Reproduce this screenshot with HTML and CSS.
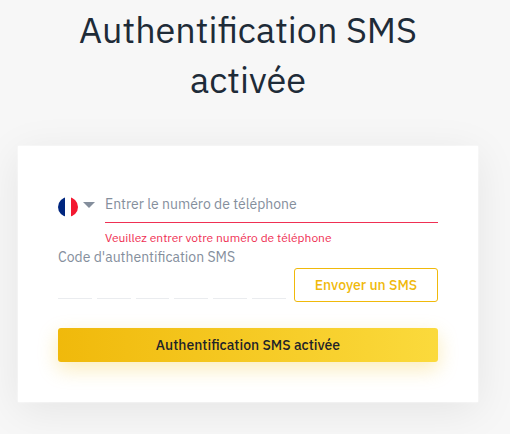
FILE: index.html
```html
<!DOCTYPE html>
<html lang="fr">
<head>
  <meta charset="UTF-8">
  <meta name="viewport" content="width=device-width, initial-scale=1.0">
  <title>Authentification SMS</title>
  <link rel="stylesheet" href="styles.css">
</head>
<body>
  <h1 class="title">Authentification SMS activée</h1>

  <form class="card">
    <!-- Phone -->
    <div class="phone-row">
      <div class="country">
        <svg class="flag" viewBox="0 0 20 20">
          <clipPath id="round"><circle cx="10" cy="10" r="10"/></clipPath>
          <g clip-path="url(#round)">
            <rect width="20" height="20" fill="#fff"/>
            <rect width="7" height="20" fill="#00267f"/>
            <rect x="13" width="7" height="20" fill="#f31830"/>
          </g>
        </svg>
        <svg class="arrow" viewBox="0 0 12 6"><path d="M0 0h12L6 6z" fill="#848e9c"/></svg>
      </div>
      <div class="phone-field">
        <input class="phone-input" type="tel" placeholder="Entrer le numéro de téléphone">
        <p class="error">Veuillez entrer votre numéro de téléphone</p>
      </div>
    </div>

    <!-- Code -->
    <label class="code-label">Code d'authentification SMS</label>
    <div class="code-row">
      <div class="digits">
        <span></span><span></span><span></span><span></span><span></span><span></span>
      </div>
      <button type="button" class="send-btn">Envoyer un SMS</button>
    </div>

    <button type="button" class="submit-btn">Authentification SMS activée</button>
  </form>
</body>
</html>
```

FILE: styles.css
```css
* {
  box-sizing: border-box;
}

body {
  margin: 0;
  padding: 5px 32px 0 18px;
  height: 434px;
  overflow: hidden;
  background-color: #f7f7f7;
  font-family: "IBM Plex Sans", Roboto, sans-serif;
  color: #1e2329;
}

.title {
  margin: 0 0 41px;
  padding: 0 40px;
  font-size: 36px;
  line-height: 50px;
  font-weight: 400;
  text-align: center;
  color: #1e2b38;
}

.card {
  width: 460px;
  height: 256px;
  padding: 40px;
  background-color: #fff;
  box-shadow: 0 0 2px #fff, 0 8px 40px rgba(0, 0, 0, 0.08);
}

/* Phone */
.phone-row {
  display: flex;
  height: 62px;
}

.country {
  display: flex;
  gap: 5px;
  width: 47px;
  padding-top: 11px;
}

.flag {
  width: 20px;
  height: 20px;
}

.arrow {
  width: 12px;
  height: 6px;
  margin-top: 5px;
}

.phone-field {
  flex: 1;
}

.phone-input {
  display: block;
  width: 100%;
  height: 37px;
  padding: 0;
  border: none;
  border-bottom: 1px solid #ef3054;
  outline: none;
  background: none;
  font-family: inherit;
  font-size: 14px;
}

.phone-input::placeholder {
  color: #848e9c;
}

.error {
  margin: 7px 0 0;
  font-size: 12px;
  line-height: 16px;
  color: #ef3054;
}

/* Code */
.code-label {
  display: block;
  height: 20px;
  font-size: 14px;
  line-height: 18px;
  color: #848e9c;
}

.code-row {
  display: flex;
  justify-content: space-between;
  height: 34px;
}

.digits {
  display: grid;
  grid-template-columns: repeat(6, 1fr);
  gap: 5px;
  width: 228px;
  height: 31px;
}

.digits span {
  border-bottom: 1px solid #eaecef;
}

.send-btn,
.submit-btn {
  height: 34px;
  padding: 0;
  border: none;
  border-radius: 3px;
  font-family: inherit;
  font-size: 14px;
  font-weight: 500;
}

.send-btn {
  width: 144px;
  border: 1px solid #f0b90b;
  background: #fff;
  color: #f0b90b;
}

.submit-btn {
  display: block;
  width: 100%;
  margin-top: 26px;
  background: linear-gradient(90deg, #f0b90b, #fbda3c);
  box-shadow: 0 7px 20px rgba(240, 185, 11, 0.28);
  color: #1e2329;
}
```
